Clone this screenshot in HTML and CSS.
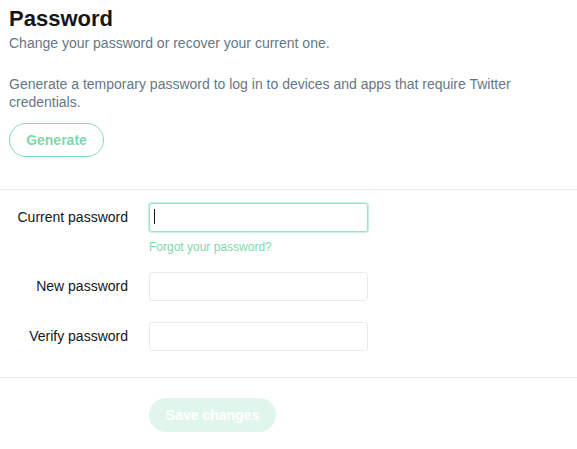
FILE: index.html
```html
<!DOCTYPE html>
<html>
<head>
<meta charset="utf-8">
<link rel="stylesheet" href="styles.css">
</head>
<body>
<div class="page">
  <section class="intro">
    <h1 class="title">Password</h1>
    <p class="subtitle">Change your password or recover your current one.</p>
    <p class="desc">Generate a temporary password to log in to devices and apps that require Twitter credentials.</p>
    <button class="btn-generate" type="button">Generate</button>
  </section>
  <div class="divider"></div>
  <section class="fields">
    <div class="row">
      <label class="label">Current password</label>
      <div class="control">
        <div class="input input-focused"><span class="caret"></span></div>
        <a class="forgot">Forgot your password?</a>
      </div>
    </div>
    <div class="row">
      <label class="label">New password</label>
      <div class="control"><div class="input"></div></div>
    </div>
    <div class="row">
      <label class="label">Verify password</label>
      <div class="control"><div class="input"></div></div>
    </div>
  </section>
  <div class="divider"></div>
  <section class="actions">
    <button class="btn-save" type="button">Save changes</button>
  </section>
</div>
</body>
</html>
```
FILE: styles.css
```css
* { box-sizing: border-box; }
html, body { margin: 0; padding: 0; background: #fff; }
body { font-family: "Liberation Sans", Arial, sans-serif; color: #14171a; }
.page { width: 577px; }
.intro { padding: 6px 9px 0 9px; }
.title { margin: 0; font-size: 22px; line-height: 26px; font-weight: bold; color: #14171a; }
.subtitle { margin: 2px 0 0 0; font-size: 14px; line-height: 18px; color: #657786; }
.desc { margin: 23px 0 0 0; font-size: 14px; line-height: 18px; color: #657786; width: 540px; }
.btn-generate {
  margin-top: 12px;
  height: 34px; width: 95px;
  border: 1px solid #86dcb6; border-radius: 17px; background: #fff;
  color: #7dd8ad; font-family: inherit; font-size: 14px; font-weight: bold; padding: 0;
}
.divider { height: 1px; background: #e6ecf0; margin-top: 32px; }
.fields { padding: 13px 0 0 0; display: flex; flex-direction: column; gap: 21px; }
.row { display: flex; align-items: flex-start; gap: 21px; }
.label { width: 128px; text-align: right; font-size: 14px; line-height: 28px; color: #14171a; }
.control { display: flex; flex-direction: column; }
.input { width: 219px; height: 29px; border: 1px solid #e6ecf0; border-radius: 3px; position: relative; background: #fff; }
.input-focused { border: 1px solid #9ae3c3; box-shadow: 0 0 0 1px #c9f0de; }
.caret { position: absolute; left: 4px; top: 5px; width: 1px; height: 15px; background: #14171a; }
.forgot { margin-top: 7px; margin-bottom: -4px; font-size: 12px; line-height: 16px; color: #7dd8ad; }
.fields + .divider { margin-top: 26px; }
.actions { padding: 20px 0 0 149px; }
.btn-save {
  height: 34px; width: 127px; border: none; border-radius: 17px;
  background: #e0f6ed; color: #fff; font-family: inherit; font-size: 14px; font-weight: bold; padding: 0;
}
```
